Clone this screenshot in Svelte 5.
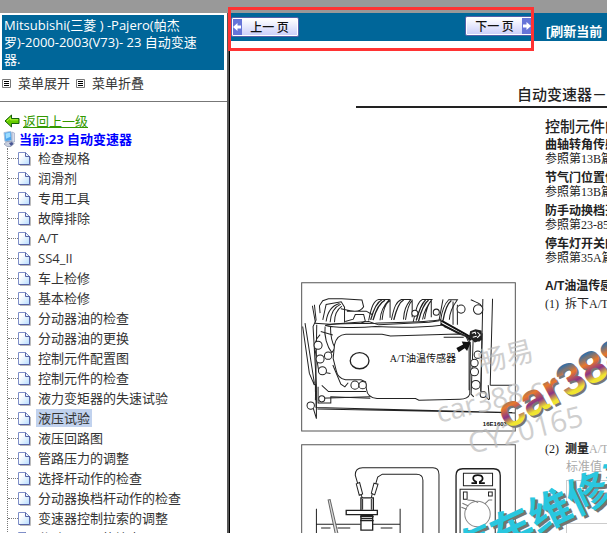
<script lang="ts">
	let selected = $state('液压试验');

	const ITEMS = [
		'检查规格',
		'润滑剂',
		'专用工具',
		'故障排除',
		'A/T',
		'SS4_II',
		'车上检修',
		'基本检修',
		'分动器油的检查',
		'分动器油的更换',
		'控制元件配置图',
		'控制元件的检查',
		'液力变矩器的失速试验',
		'液压试验',
		'液压回路图',
		'管路压力的调整',
		'选择杆动作的检查',
		'分动器换档杆动作的检查',
		'变速器控制拉索的调整',
		'分动器ECU的检查'
	];

	const CHECKS = [
		{ name: '曲轴转角传感', ref: '参照第13B篇' },
		{ name: '节气门位置传', ref: '参照第13B篇' },
		{ name: '防手动换档开', ref: '参照第23-85' },
		{ name: '停车灯开关的', ref: '参照第35A篇' }
	];

	function select(e: MouseEvent, item: string) {
		e.preventDefault();
		selected = item;
	}
</script>

<div class="app">
	<div class="topbar"></div>
	<div class="frames">
		<aside>
			<h1>Mitsubishi(三菱 ) -Pajero(帕杰罗)-2000-2003(V73)- 23 自动变速器.</h1>
			<div class="menu">
				{#each ['菜单展开', '菜单折叠'] as label}
					<a href="#menu">
						<svg viewBox="0 0 9 9" width="9" height="9">
							<path d="M.5.5h8v8h-8z" fill="#fff" stroke="#777" />
							<path d="M2 2.500h5M2 4.500h5M2 6.500h5" stroke="#000" />
						</svg>
						{label}
					</a>
				{/each}
			</div>
			<hr />
			<div class="back">
				<svg viewBox="0 0 16 14" width="16" height="14">
					<path d="M1 7l6.500-6v3.500H15v5H7.500V13z" fill="#6c0" stroke="#15630a" />
					<path d="M3 7l3.500-3.200v2H14" fill="none" stroke="#b6f23c" />
				</svg>
				<a href="#up">返回上一级</a>
			</div>
			<div class="current">
				<svg viewBox="0 0 14 16" width="14" height="16">
					<path d="M1 1.500l7-1 1 9-7 1z" fill="#4aa5ee" stroke="#a9c0dc" />
					<path d="M2.500 2.500l4.500-.700.500 4-4.500 2z" fill="#9cdcff" />
					<path d="M9 1l2.500 1v9L9 11z" fill="#d7deec" stroke="#93a0bf" stroke-width=".6" />
					<path d="M1 13l3-2.500h5l2 2-3 3H4z" fill="#c9cfdd" stroke="#8893ad" stroke-width=".7" />
					<path d="M6 12l3-1 1.500 2L8 15z" fill="#4a5794" />
				</svg>
				<span>当前:23 自动变速器</span>
			</div>
			<ul>
				{#each ITEMS as item}
					<li>
						<svg viewBox="0 0 13 15" width="13" height="15">
							<defs>
								<linearGradient id="sheet" x1="0" y1="0" x2="1" y2="1">
									<stop offset="0.3" stop-color="#fff" />
									<stop offset="1" stop-color="#b5dcff" />
								</linearGradient>
							</defs>
							<path d="M2 14.500h10.500V6" fill="none" stroke="#bbb" />
							<path d="M.5 1.500h7l4 4v8H.5z" fill="url(#sheet)" stroke="#7f8fc9" />
							<path d="M7.500 1.500v4h4M11.500 5v8.500H1" fill="none" stroke="#5763a5" />
						</svg>
						<a href="#item" class:selected={item === selected} onclick={(e) => select(e, item)}>{item}</a>
					</li>
				{/each}
			</ul>
		</aside>

		<main>
			<div class="toolbar">
				<button class="prev">
					<span class="cap">
						<svg viewBox="0 0 9 10" width="9" height="10"><path d="M0 5l4.500-4v2.500H8v3H4.500V9z" fill="#fff" /></svg>
					</span>
					<span class="label">上一 页</span>
				</button>
				<button class="next">
					<span class="label">下一 页</span>
					<span class="cap">
						<svg viewBox="0 0 9 10" width="9" height="10"><path d="M9 5L4.500 1v2.500H1v3h3.500V9z" fill="#fff" /></svg>
					</span>
				</button>
				<a class="refresh" href="#refresh">[刷新当前</a>
			</div>

			<article>
				<header>自动变速器－车</header>
				<div class="columns">
					<div class="figures">
						<svg class="figure" viewBox="33 37 642 447">
							<g fill="none" stroke="#222" stroke-width="3">
								<path d="M35 39h638v443H35z" stroke="#555" />
								<path d="M605 87l-7 258M598 345h65M592 345l4 43M82 416l590 12M78 362v50l586 15" />
								<path d="M38 170l20 140 15 35M45 160l28 180M73 105l5 45-9 20 10 175v100l-12-40-10-5" />
								<path d="M67 108l9 50M80 165l-4 225M84 350v48h38v-18l118 4M95 346l20 18h112M70 340l6 5v20" />
								<path d="M74 160l46 3 115-8 30 10 150-8 30-4 12-64M576 88l-6 275 24 26M500 105v60M487 95v70" />
								<path d="M235 152c8-40 15-60 30-63h32c-15 16-27 40-28 62M275 150c3-30 12-50 24-58v52M303 150c8-40 15-55 30-61h28c-15 20-20 30-22 60M345 150c5-32 12-50 20-58v50M368 156c10-45 14-60 28-67h28c-15 20-25 40-28 60M402 148c5-28 12-48 20-56v50M450 152c4-32 12-50 24-62h26c-15 20-23 36-24 60" />
								<path d="M241 150c10-36 20-54 34-60M248 151c10-36 20-52 36-60M310 150c9-36 18-54 30-60M377 152c10-36 18-52 28-61M384 154c9-36 18-54 30-63M457 152c6-34 12-50 25-60" stroke-width="4" />
								<path d="M90 130l-2-22 10-15 17-6h40l60 4 5 20c-8 14-20 16-40 12l-28-6M98 150l10-46 45-8 10 16v46M108 155c4-30 18-48 40-54M120 157c2-28 14-46 32-54M133 157c0-20 8-38 22-48M165 155l24-7 6-14h25l5 20-13 6M170 124h58l17 10" />
								<path d="M105 166c22 8 100 9 150 4 80 4 145 2 197-4l-2-16c-60 10-140 6-195 10-70 2-120 0-148 6zM105 170c-4 28 6 60 20 78l10-14c-12-18-14-40-14-64" />
								<path d="M452 152l80 45 35 16M450 162l92 48" stroke="#111" stroke-width="6" />
								<path d="M460 170l80 34M540 90c20 10 34 10 34 30" />
								<path d="M90 194c-16 15-20 35-12 60l8 50 35 6M92 185l36 10" />
								<path d="M133 225c4-20 16-31 34-32h108l25 5 200-6c25 4 38 12 39 35l-2 145c-4 12-15 15-30 15l-122 3-10-5H260c-20-1-30-12-32-30l-2-20-14-6h-46c-16-3-25-12-28-28l-9-36z" fill="#fff" />
								<path d="M128 285l24 57 12 8 10-12M526 200l9 20v140M547 212l-6 160 8 8M574 190l-4 175M459 202h60M90 384l150-4" />
								<ellipse cx="208" cy="272" rx="28" ry="24" fill="#fff" stroke-width="4" />
							</g>
							<g fill="#fff" stroke="#222" stroke-width="3">
								<circle cx="84" cy="226" r="12" />
								<circle cx="90" cy="267" r="12" />
								<circle cx="114" cy="257" r="11" />
								<circle cx="97" cy="302" r="12" />
								<circle cx="194" cy="345" r="12" />
								<circle cx="217" cy="345" r="11" />
								<circle cx="95" cy="386" r="9" />
								<circle cx="62" cy="406" r="11" />
								<circle cx="511" cy="118" r="12" />
								<circle cx="562" cy="119" r="14" />
								<circle cx="437" cy="127" r="9" />
								<circle cx="373" cy="130" r="9" />
								<circle cx="561" cy="254" r="11" />
								<circle cx="551" cy="279" r="11" />
								<circle cx="551" cy="305" r="12" />
								<circle cx="555" cy="344" r="13" />
								<circle cx="577" cy="373" r="9" />
							</g>
							<path d="M538 184l16-6 18 4 2 28-22 8-17-16z" fill="#222" />
							<path d="M543 190l10-3 2 6M560 187l8 8-9 9M546 202l12-3" fill="none" stroke="#fff" stroke-width="3" />
							<path d="M497 234l20-10-4-9 27 2-11 26-7-8-18 12z" fill="#111" />
							<text x="298" y="277" class="callout">A/T油温传感器</text>
							<text x="576" y="468" class="code">16E1603</text>
						</svg>

						<svg class="figure" viewBox="3 41 642 447">
							<g fill="none" stroke="#222" stroke-width="3">
								<path d="M5 43h638v443H5z" stroke="#555" />
								<path d="M172 158l-7-24c0-15 6-22 22-22h210c12 0 18 6 18 20v280M226 160l6-20 14-9h102c14 0 19 6 19 18v260" />
								<path d="M168 160l10-4 9 34-10 4zM221 158l12 3-10 32-10-5zM182 192l5 12M216 188l-3 14" fill="#fff" />
								<path d="M49 234v240M299 234v240M49 281h132M217 281h82M63 292h28M112 292h38M241 292h35" />
								<path d="M84 208l6-1 24 104-8 1z" fill="#ddd" stroke="#666" />
								<path d="M182 202h37v38h-37zM182 254h35v44h-35z" fill="#fff" stroke-width="4" />
								<path d="M187 205v32M213 205v32" />
								<path d="M138 239h93v13h-93z" fill="#fff" stroke-width="4" />
								<path d="M180 258h40M182 264h36M180 270h40" stroke-width="4" />
								<path d="M466 460V135c0-14 6-20 20-20h92c14 0 20 6 20 20v325" fill="#fff" stroke-width="4" />
								<path d="M488 128h87v38h-87zM478 460V176h105v284M488 184h11v22h-11zM563 184h11v12h-11z" />
								<circle cx="530" cy="250" r="38" fill="#fff" stroke="#888" />
								<path d="M500 208l18 2 14 6M485 218l18 8M482 230l16 6M552 220l12-12h10" stroke="#777" />
							</g>
							<path d="M512 158h14v-4c-12-5-13-20 5-20s18 15 6 20v4h15" fill="none" stroke="#111" stroke-width="5" />
						</svg>
					</div>

					<div class="text">
						<h2>控制元件的</h2>
						<dl>
							{#each CHECKS as check}
								<div>
									<dt>{check.name}</dt>
									<dd>{check.ref}</dd>
								</div>
							{/each}
						</dl>
						<h3>A/T油温传感</h3>
						<p>(1)&ensp;拆下A/T</p>
						<p class="measure">(2)&ensp;<b>测量</b><span>A/T</span></p>
						<p class="standard">标准值</p>
						<table>
							<tbody>
								<tr><td></td></tr>
								<tr><td></td></tr>
							</tbody>
						</table>
					</div>
				</div>

				<svg class="marks" viewBox="0 0 377 492" aria-hidden="true">
					<defs>
						<linearGradient id="rainbow" x1="0" y1="0" x2="0" y2="1">
							<stop offset="0.2" stop-color="#2f6fa8" />
							<stop offset="0.4" stop-color="#e8792c" />
							<stop offset="0.58" stop-color="#8b3585" />
							<stop offset="0.74" stop-color="#f0e530" />
						</linearGradient>
					</defs>
					<g class="faint">
						<text transform="translate(251 332) rotate(-14)" font-size="28">畅易</text>
						<text transform="translate(209 382) rotate(-14)" font-size="28">car388.c</text>
						<text transform="translate(241 413) rotate(-14)" font-size="29">CY20165</text>
					</g>
					<g class="site">
						<text transform="translate(279 391) rotate(-28)" fill="#777">car388</text>
						<text transform="translate(277 389) rotate(-28)" fill="url(#rainbow)">car388</text>
					</g>
					<g class="slogan">
						<text transform="translate(234 530) rotate(-25)" fill="#77746f">汽车维修资</text>
						<text transform="translate(231 528) rotate(-25)" fill="#29c7df">汽车维修资</text>
					</g>
				</svg>
			</article>
		</main>
	</div>
	<div class="highlight"></div>
</div>

<style>
	:global(body) {
		margin: 0;
		overflow: hidden;
		background: #fff;
	}

	.app {
		position: relative;
		display: flex;
		flex-direction: column;
		height: 100vh;
		overflow: hidden;
		font-family: 'Open Sans', 'Noto Sans CJK SC', sans-serif;
		font-size: 13px;
		color: #333;
	}

	.topbar {
		flex: none;
		height: 13px;
		background: #999;
	}

	.frames {
		display: flex;
		flex: 1;
		min-height: 0;
	}

	aside {
		flex: none;
		width: 227px;
		border-right: 2px solid #555;
		box-shadow: 1px 0 #000;
		overflow: hidden;
	}

	a {
		color: inherit;
		text-decoration: none;
	}

	svg {
		flex: none;
		display: block;
	}

	h1 {
		margin: 2px 3px 0 2px;
		padding: 2px 12px 2px 2px;
		background: #069;
		color: #fff;
		font-size: 13px;
		font-weight: 400;
		line-height: 17px;
	}

	.menu {
		display: flex;
		gap: 6px;
		padding: 4px 2px 0;
		line-height: 18px;
	}

	.menu a {
		display: flex;
		align-items: center;
		gap: 7px;
	}

	hr {
		margin: 9px 0 10px;
		border: 0;
		border-top: 1px solid #777;
	}

	.back,
	.current {
		display: flex;
		align-items: center;
		gap: 3px;
		padding-left: 4px;
		line-height: 18px;
	}

	.back a {
		color: #390;
		text-decoration: underline;
	}

	.current {
		gap: 2px;
		padding-left: 3px;
		color: #00f;
		font-weight: 700;
	}

	ul {
		margin: 0 0 0 7px;
		padding: 0;
		list-style: none;
		border-left: 1px dotted #777;
	}

	li {
		display: flex;
		align-items: center;
		height: 20px;
		white-space: nowrap;
	}

	li::before {
		content: '';
		width: 10px;
		border-top: 1px dotted #777;
	}

	li a {
		margin-left: 5px;
		padding: 0 2px;
		line-height: 18px;
	}

	.selected {
		background: #c1d2ee;
	}

	main {
		display: flex;
		flex: 1;
		flex-direction: column;
		min-width: 0;
		padding-left: 1px;
	}

	.toolbar {
		display: flex;
		flex: none;
		align-items: center;
		height: 28px;
		padding-left: 1px;
		background: #069;
		white-space: nowrap;
	}

	button {
		display: flex;
		flex: none;
		align-items: stretch;
		width: 68px;
		height: 20px;
		padding: 1px;
		border: 1px solid #5560a8;
		border-radius: 2px;
		background: #fff;
		font: 500 12px/16px 'Noto Sans CJK SC', sans-serif;
		color: #111;
		cursor: pointer;
	}

	.label {
		flex: 1;
		background: linear-gradient(#fff, #ccd0fa);
		white-space: nowrap;
	}

	.cap {
		display: flex;
		align-items: center;
		width: 9px;
		background: #6674d8;
	}

	.next {
		margin-left: 166px;
		margin-bottom: 2px;
	}

	.refresh {
		margin-left: 13px;
		padding-top: 10px;
		color: #fff;
		font: 700 13px/18px 'Liberation Sans', 'Noto Sans CJK SC', sans-serif;
	}

	article {
		position: relative;
		flex: 1;
		min-height: 0;
		overflow: hidden;
		color: #222;
		font-family: 'Liberation Serif', 'Noto Sans CJK SC', sans-serif;
		font-size: 12px;
		white-space: nowrap;
	}

	header {
		margin: 43px 0 0 126px;
		padding-left: 161px;
		border-bottom: 2px solid #222;
		font-size: 15px;
		font-weight: 500;
		line-height: 22px;
	}

	.columns {
		display: flex;
		gap: 29px;
		padding: 8px 0 0 71px;
	}

	.figures {
		display: flex;
		flex: none;
		flex-direction: column;
		gap: 12px;
		width: 215px;
		padding-top: 166px;
	}

	.figure {
		width: 100%;
	}

	.callout {
		font-size: 30px;
		fill: #111;
	}

	.code {
		font: 700 18px 'Liberation Sans', sans-serif;
		fill: #111;
	}

	.text {
		flex: none;
	}

	h2,
	h3,
	p,
	dl,
	dd {
		margin: 0;
	}

	h2 {
		font-size: 15px;
		font-weight: 500;
		line-height: 22px;
	}

	dl div {
		margin-bottom: 5px;
	}

	dt,
	dd {
		line-height: 14px;
	}

	dt,
	h3 {
		font-family: 'Liberation Sans', 'Noto Sans CJK SC', sans-serif;
		font-size: 12px;
		font-weight: 700;
	}

	h3 {
		margin-top: 12px;
		line-height: 18px;
	}

	p {
		line-height: 18px;
	}

	.measure {
		margin-top: 127px;
	}

	.measure span,
	.standard {
		color: #aaa;
	}

	.standard {
		padding-left: 21px;
	}

	table {
		width: 200px;
		margin: 4px 0 0 21px;
		border-collapse: collapse;
	}

	td {
		height: 42px;
		padding: 0 6px;
		border: 1px solid #ccc;
	}

	.marks {
		position: absolute;
		top: 0;
		left: 0;
		width: 377px;
		overflow: visible;
		pointer-events: none;
	}

	.faint {
		fill: #bbb;
		opacity: 0.7;
		font-family: 'Open Sans', 'Noto Sans CJK SC', sans-serif;
	}

	.site {
		font: 700 45px 'Liberation Sans', sans-serif;
	}

	.slogan {
		font: 700 42px 'Noto Sans CJK SC', sans-serif;
	}

	.highlight {
		position: absolute;
		top: 7px;
		left: 228px;
		width: 300px;
		height: 38px;
		border: 3px solid #f33;
		pointer-events: none;
	}
</style>
